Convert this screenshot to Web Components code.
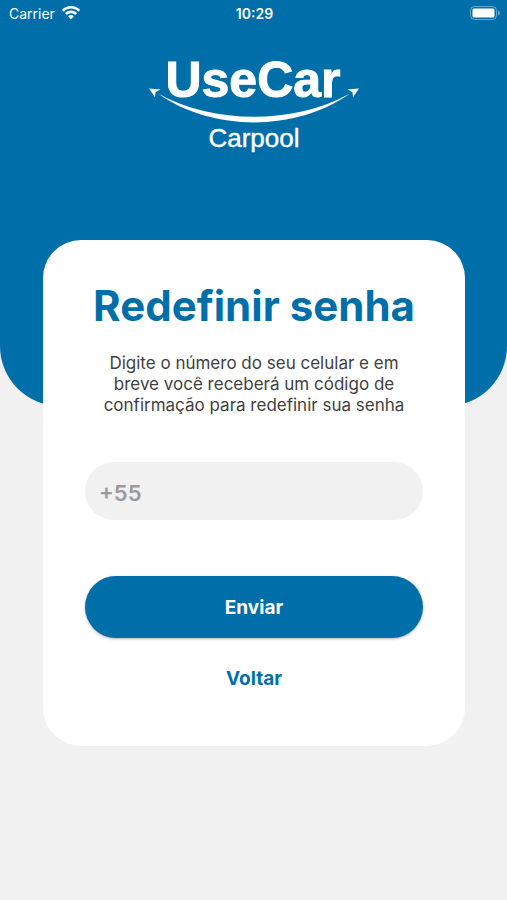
<!DOCTYPE html>
<html lang="pt-BR">
<head>
<meta charset="utf-8">
<meta name="viewport" content="width=device-width, initial-scale=1">
<title>UseCar Carpool - Redefinir senha</title>
<style>
  :root {
    --primary: #006fa9;
    --surface: #ffffff;
    --background: #f1f1f1;
    --text: #3f3f3f;
    --placeholder: #9b9b9b;
  }

  body {
    margin: 0;
    min-height: 100vh;
    background: var(--background);
    font-family: Inter, "Liberation Sans", sans-serif;
  }
</style>
</head>
<body>
<reset-page></reset-page>

<script>
// Phone status bar: carrier, clock, battery
class StatusBar extends HTMLElement {
  constructor() {
    super()
    this.attachShadow({ mode: 'open' })
  }

  connectedCallback() {
    this.shadowRoot.innerHTML = `
      <style>
        :host {
          display: grid;
          grid-template-columns: 1fr auto 1fr;
          align-items: center;
          height: 26px;
          padding: 0 7px 0 9px;
          color: white;
          font-size: 14px;
        }

        .carrier {
          display: flex;
          align-items: center;
          gap: 7px;
        }

        .time {
          font-weight: 600;
        }

        .battery {
          justify-self: end;
        }

        svg {
          display: block;
        }
      </style>
      <div class="carrier">
        <span>${this.getAttribute('carrier')}</span>
        <svg width="18" height="14" viewBox="0 0 18 14" fill="white" aria-hidden="true">
          <path d="M9 0C5.500 0 2.400 1.300 0.200 3.500c-.2.200-.2.500 0 .700l1.200 1.200c.2.200.5.200.7 0C3.900 3.600 6.300 2.600 9 2.600s5.100 1 6.900 2.800c.2.200.5.200.7 0l1.200-1.200c.2-.2.200-.5 0-.7C15.600 1.300 12.500 0 9 0z"/>
          <path d="M9 4.600c-2.200 0-4.200.8-5.700 2.200-.2.200-.2.500 0 .7l1.200 1.200c.2.200.5.200.7 0C6.200 7.700 7.500 7.200 9 7.200s2.800.5 3.800 1.500c.2.200.5.200.7 0l1.200-1.200c.2-.2.200-.5 0-.7C13.200 5.400 11.200 4.600 9 4.600z"/>
          <path d="M9 9.100c-1 0-1.900.4-2.600 1-.2.200-.2.500 0 .7l2.200 2.300c.2.200.5.200.7 0l2.300-2.300c.2-.2.200-.5 0-.7-.7-.6-1.600-1-2.600-1z"/>
        </svg>
      </div>
      <span class="time">${this.getAttribute('time')}</span>
      <svg class="battery" width="30" height="14" viewBox="0 0 30 14" aria-hidden="true">
        <rect x="0.500" y="0.500" width="26" height="13" rx="4" fill="none" stroke="white" stroke-opacity=".4"/>
        <rect x="2.500" y="2.500" width="22" height="9" rx="1.500" fill="white"/>
        <path d="M28 4.500c1.300.5 2 1.400 2 2.500s-.7 2-2 2.500z" fill="white" fill-opacity=".4"/>
      </svg>
    `
  }
}

// Brand logo: the name over a smiling double arrow
class BrandLogo extends HTMLElement {
  constructor() {
    super()
    this.attachShadow({ mode: 'open' })
  }

  connectedCallback() {
    this.shadowRoot.innerHTML = `
      <style>
        :host {
          display: block;
        }

        svg {
          display: block;
          margin: 0 auto;
        }

        text {
          fill: white;
          font-family: "Liberation Sans", Arial, sans-serif;
          text-anchor: middle;
        }

        .name {
          font-size: 50px;
          font-weight: 700;
          stroke: white;
          stroke-width: 1px;
        }

        .tagline {
          font-size: 26px;
          stroke: white;
          stroke-width: 0.4px;
        }
      </style>
      <svg width="212" height="120" viewBox="0 -12 212 120" role="img" aria-label="UseCar Carpool">
        <text class="name" x="105" y="43">UseCar</text>
        <path fill="white" d="M10 39.500C66 70.500 146 70.500 202 39.500C148 78 64 78 10 39.500z"/>
        <path fill="white" d="M1 34.500l11.500 1-5 2.800-.5 5z"/>
        <path fill="white" d="M211 34.500l-11.500 1 5 2.800.5 5z"/>
        <text class="tagline" x="106" y="93">Carpool</text>
      </svg>
    `
  }
}

// White rounded panel with a title and a description
class FormCard extends HTMLElement {
  constructor() {
    super()
    this.attachShadow({ mode: 'open' })
  }

  connectedCallback() {
    this.shadowRoot.innerHTML = `
      <style>
        :host {
          display: block;
          box-sizing: border-box;
          padding: 40px 42px 48px;
          background: var(--surface);
          border-radius: 38px;
          text-align: center;
        }

        h1 {
          margin: 0 -20px;
          color: var(--primary);
          font-size: 42px;
          font-weight: 700;
          line-height: 52px;
        }

        p {
          max-width: 320px;
          margin: 21px auto 46px;
          color: var(--text);
          font-size: 17px;
          line-height: 21px;
        }
      </style>
      <h1><slot name="title"></slot></h1>
      <p><slot name="description"></slot></p>
      <slot></slot>
    `
  }
}

class PhoneField extends HTMLElement {
  constructor() {
    super()
    this.attachShadow({ mode: 'open' })
  }

  connectedCallback() {
    this.shadowRoot.innerHTML = `
      <style>
        :host {
          display: block;
        }

        input {
          display: block;
          box-sizing: border-box;
          width: 100%;
          height: 58px;
          padding: 4px 14px 0;
          border: 0;
          border-radius: 29px;
          background: var(--background);
          color: var(--text);
          font: 600 22px Inter, "Liberation Sans", sans-serif;
        }

        input::placeholder {
          color: var(--placeholder);
          opacity: 1;
        }
      </style>
      <input type="tel" placeholder="${this.getAttribute('placeholder')}" aria-label="${this.getAttribute('label')}">
    `
  }
}

class AppButton extends HTMLElement {
  constructor() {
    super()
    this.attachShadow({ mode: 'open' })
  }

  connectedCallback() {
    this.shadowRoot.innerHTML = `
      <style>
        :host {
          display: block;
        }

        button {
          display: block;
          width: 100%;
          height: 62px;
          padding: 0;
          border: 0;
          border-radius: 31px;
          background: var(--primary);
          box-shadow: 0 1px 3px rgba(0, 0, 0, .3);
          color: white;
          font: 700 19px Inter, "Liberation Sans", sans-serif;
          cursor: pointer;
        }

        :host([variant="text"]) button {
          height: 40px;
          background: none;
          box-shadow: none;
          color: var(--primary);
        }
      </style>
      <button type="button"><slot></slot></button>
    `
  }
}

// Whole screen
class ResetPage extends HTMLElement {
  constructor() {
    super()
    this.attachShadow({ mode: 'open' })
  }

  connectedCallback() {
    this.shadowRoot.innerHTML = `
      <style>
        :host {
          display: block;
        }

        header {
          padding-bottom: 244px;
          background: var(--primary);
          border-radius: 0 0 60px 60px;
        }

        brand-logo {
          padding-top: 16px;
        }

        /* the card overlaps the lower part of the header */
        main {
          max-width: 480px;
          margin: -166px auto 0;
          padding: 0 42px 40px 43px;
        }

        app-button {
          margin-top: 56px;
        }

        app-button[variant="text"] {
          margin-top: 20px;
        }
      </style>
      <header>
        <status-bar carrier="Carrier" time="10:29"></status-bar>
        <brand-logo></brand-logo>
      </header>
      <main>
        <form-card>
          <span slot="title">Redefinir senha</span>
          <span slot="description">Digite o número do seu celular e em breve você receberá um código de confirmação para redefinir sua senha</span>
          <phone-field placeholder="+55" label="Número do celular"></phone-field>
          <app-button>Enviar</app-button>
          <app-button variant="text">Voltar</app-button>
        </form-card>
      </main>
    `
  }
}

customElements.define('status-bar', StatusBar)
customElements.define('brand-logo', BrandLogo)
customElements.define('form-card', FormCard)
customElements.define('phone-field', PhoneField)
customElements.define('app-button', AppButton)
customElements.define('reset-page', ResetPage)
</script>
</body>
</html>
